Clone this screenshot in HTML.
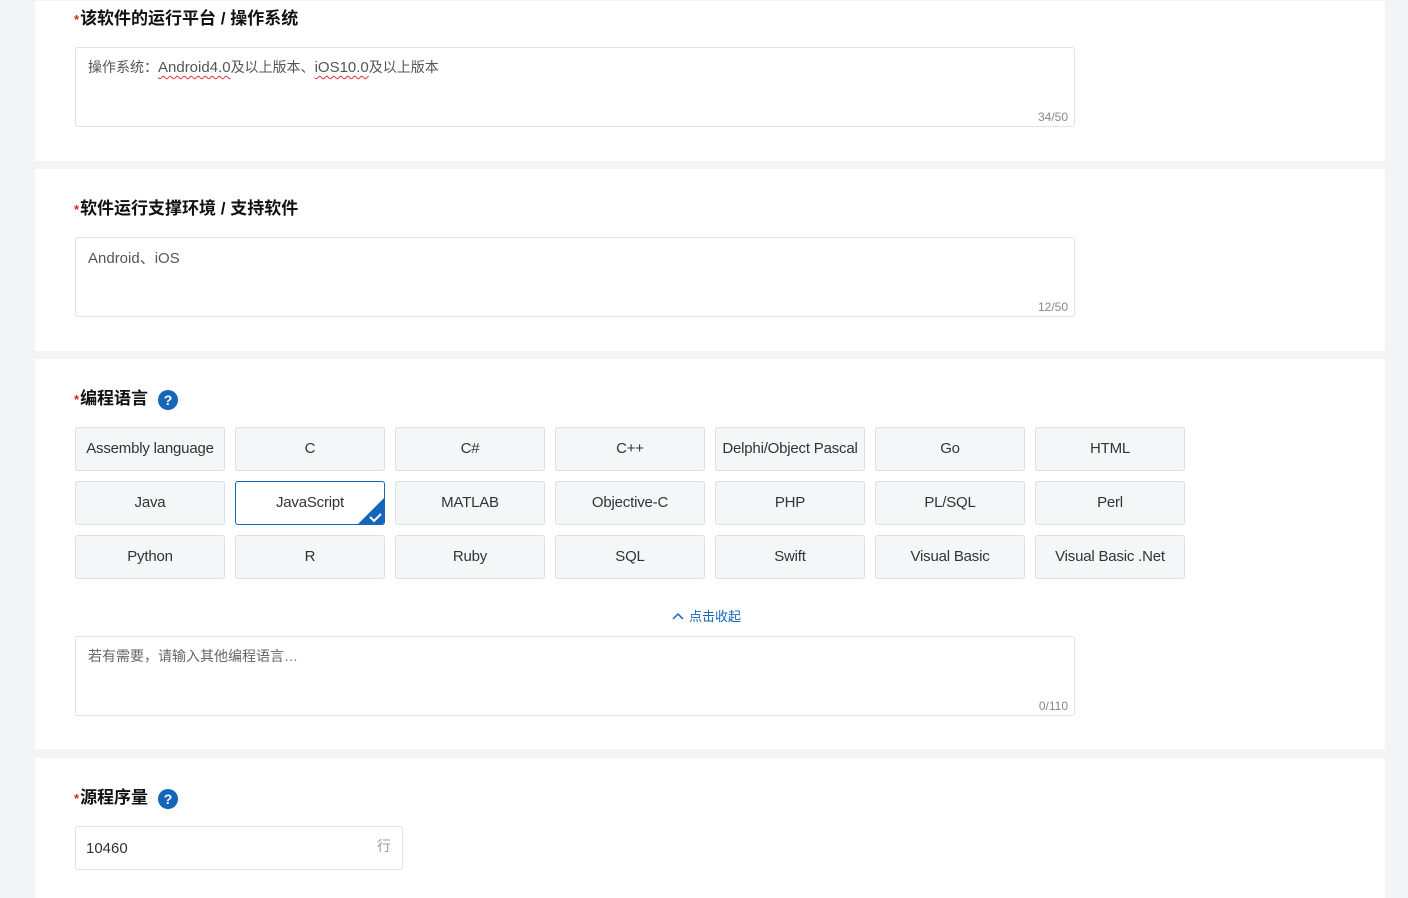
<!DOCTYPE html>
<html><head><meta charset="utf-8"><style>
*{box-sizing:border-box;margin:0;padding:0}
body{width:1408px;height:898px;background:#f3f4f6;position:relative;overflow:hidden;font-family:"Liberation Sans","Noto Sans CJK SC",sans-serif;color:#333}
.card{position:absolute;left:35px;width:1350px;background:#fff}
.t{position:absolute;left:74px;font-size:17px;font-weight:bold;color:#111;line-height:20px;white-space:nowrap}
.t i{color:#e02020;font-style:normal;font-size:13px;margin-right:1px}
.q{display:inline-block;width:20px;height:20px;border-radius:50%;background:#1565b8;color:#fff;font-size:14px;text-align:center;line-height:20px;margin-left:10px;vertical-align:-1px}
.ta{position:absolute;left:75px;width:1000px;height:80px;border:1px solid #dfe2e6;border-radius:3px;background:#fff;font-size:14px;color:#555;padding:9px 12px}
.ta .c{position:absolute;right:6px;bottom:2px;font-size:12px;color:#888}
.b{position:absolute;width:150px;height:44px;border:1px solid #dde0e4;border-radius:3px;background:#f5f6f7;font-size:15px;color:#333;text-align:center;line-height:42px;white-space:nowrap;letter-spacing:-0.2px}
.sel{background:#fff;border-color:#1565b8;overflow:hidden}
.u{text-decoration:underline wavy #e03030;text-decoration-thickness:1px;text-underline-offset:3px;font-size:15px}
</style></head><body>
<div class="card" style="top:1px;height:160px"></div>
<div class="card" style="top:169px;height:182px"></div>
<div class="card" style="top:359px;height:390px"></div>
<div class="card" style="top:758px;height:140px"></div>

<div class="t" style="top:9px"><i>*</i>该软件的运行平台 / 操作系统</div>
<div class="ta" style="top:47px">操作系统：<span class="u">Android4.0</span>及以上版本、<span class="u">iOS10.0</span>及以上版本<span class="c">34/50</span></div>

<div class="t" style="top:199px"><i>*</i>软件运行支撑环境 / 支持软件</div>
<div class="ta" style="top:237px;font-size:15px">Android、iOS<span class="c">12/50</span></div>

<div class="t" style="top:389px"><i>*</i>编程语言<span class="q">?</span></div>

<div class="b" style="left:75px;top:427px">Assembly language</div>
<div class="b" style="left:235px;top:427px">C</div>
<div class="b" style="left:395px;top:427px">C#</div>
<div class="b" style="left:555px;top:427px">C++</div>
<div class="b" style="left:715px;top:427px">Delphi/Object Pascal</div>
<div class="b" style="left:875px;top:427px">Go</div>
<div class="b" style="left:1035px;top:427px">HTML</div>
<div class="b" style="left:75px;top:481px">Java</div>
<div class="b sel" style="left:235px;top:481px">JavaScript<svg style="position:absolute;right:0;bottom:0" width="26" height="26" viewBox="0 0 26 26"><path d="M26 0V26H0Z" fill="#1565b8"/><path d="M12 19l4 4 7-7" stroke="#fff" stroke-width="2" fill="none"/></svg></div>
<div class="b" style="left:395px;top:481px">MATLAB</div>
<div class="b" style="left:555px;top:481px">Objective-C</div>
<div class="b" style="left:715px;top:481px">PHP</div>
<div class="b" style="left:875px;top:481px">PL/SQL</div>
<div class="b" style="left:1035px;top:481px">Perl</div>
<div class="b" style="left:75px;top:535px">Python</div>
<div class="b" style="left:235px;top:535px">R</div>
<div class="b" style="left:395px;top:535px">Ruby</div>
<div class="b" style="left:555px;top:535px">SQL</div>
<div class="b" style="left:715px;top:535px">Swift</div>
<div class="b" style="left:875px;top:535px">Visual Basic</div>
<div class="b" style="left:1035px;top:535px">Visual Basic .Net</div>

<div style="position:absolute;left:671px;top:608px;font-size:13px;color:#1565b8;line-height:18px"><svg width="14" height="10" viewBox="0 0 14 10" style="margin-right:4px"><path d="M2 8l5-5 5 5" stroke="#1565b8" stroke-width="1.5" fill="none"/></svg>点击收起</div>
<div class="ta" style="top:636px;color:#666">若有需要，请输入其他编程语言…<span class="c">0/110</span></div>

<div class="t" style="top:788px"><i>*</i>源程序量<span class="q">?</span></div>
<div style="position:absolute;left:75px;top:826px;width:328px;height:44px;border:1px solid #dfe2e6;border-radius:3px;font-size:15px;line-height:44px;padding-left:10px;color:#333">10460<span style="position:absolute;right:11px;top:-3px;color:#999;font-size:14px">行</span></div>
</body></html>
